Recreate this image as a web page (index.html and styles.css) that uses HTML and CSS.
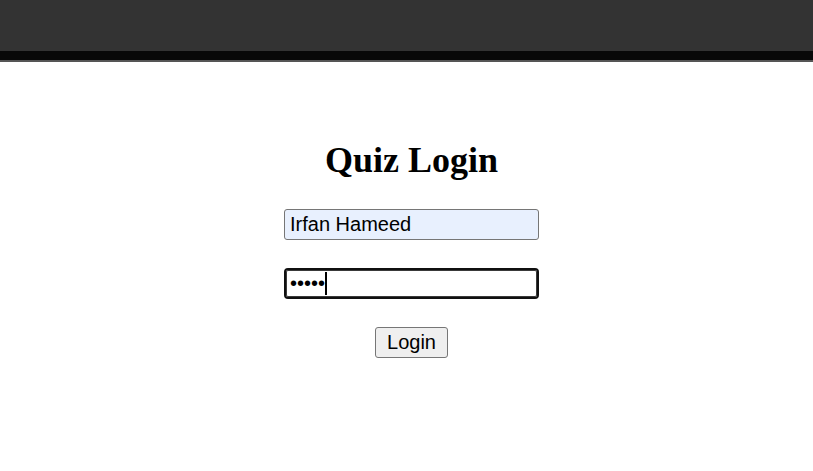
FILE: index.html
```html
<!DOCTYPE html>
<html lang="en">
<head>
<meta charset="utf-8">
<title>Quiz Login</title>
<link rel="stylesheet" href="styles.css">
</head>
<body>
<header class="topbar"></header>
<main class="login">
  <h2 class="title">Quiz Login</h2>
  <form class="form" onsubmit="return false">
    <input class="field field-filled" type="text" value="Irfan Hameed">
    <div class="field-wrap">
      <input class="field field-focus" type="password" value="12345">
      <span class="caret"></span>
    </div>
    <button class="btn" type="submit">Login</button>
  </form>
</main>
</body>
</html>
```
FILE: styles.css
```css
html, body {
  margin: 0;
  padding: 0;
  background: #ffffff;
}
body {
  font-family: "Liberation Serif", "Times New Roman", serif;
}
.topbar {
  height: 51px;
  background: #333333;
  border-bottom: 9px solid #080808;
  box-shadow: 0 2px 0 #555555;
}
.login {
  display: flex;
  flex-direction: column;
  align-items: center;
  padding-top: 80px;
  padding-left: 10px;
}
.title {
  margin: 0;
  font-size: 36px;
  line-height: 40px;
  font-weight: bold;
  color: #000;
}
.form {
  margin-top: 29px;
  display: flex;
  flex-direction: column;
  align-items: center;
  gap: 28px;
}
.field {
  box-sizing: border-box;
  width: 255px;
  height: 31px;
  margin: 0;
  padding: 0 5px;
  border: 1px solid #767676;
  border-radius: 3px;
  font-family: "Liberation Sans", Arial, sans-serif;
  font-size: 20px;
  color: #000;
  background: #ffffff;
  outline: none;
}
.field-filled {
  background: #e8f0fe;
}
.field-wrap {
  position: relative;
  display: flex;
}
.field-focus {
  border: 2px solid #101010;
  box-shadow: inset 0 0 0 1px #3a3a3a;
  border-radius: 4px;
  padding-left: 4px;
}
.caret {
  position: absolute;
  left: 41px;
  top: 4px;
  width: 2px;
  height: 23px;
  background: #000;
}
.btn {
  box-sizing: border-box;
  width: 73px;
  height: 31px;
  padding: 0;
  margin: 0;
  font-family: "Liberation Sans", Arial, sans-serif;
  font-size: 20px;
  color: #000;
  background: #efefef;
  border: 1px solid #767676;
  border-radius: 3px;
}
```
